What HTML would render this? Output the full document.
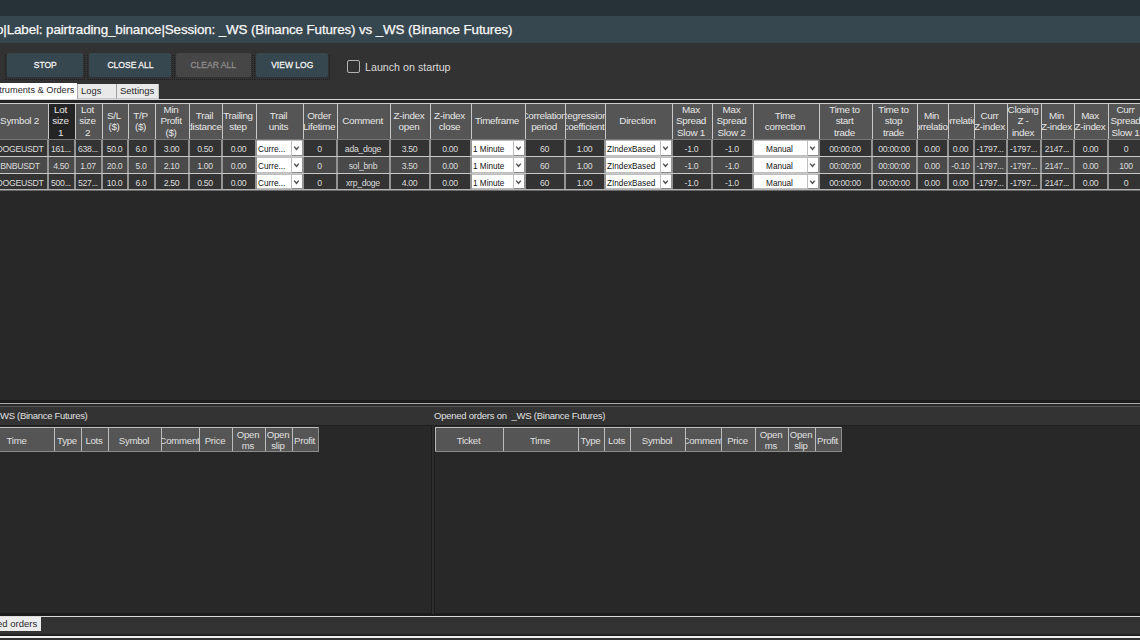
<!DOCTYPE html>
<html><head><meta charset="utf-8"><style>
*{margin:0;padding:0;box-sizing:border-box}
html,body{width:1140px;height:640px;overflow:hidden;background:#323232;font-family:"Liberation Sans",sans-serif;position:relative}
.a{position:absolute}
.c{position:absolute;display:flex;align-items:center;justify-content:center;overflow:hidden;white-space:nowrap}
.hd{color:#e6e6e6;font-size:9.9px;line-height:11.3px;text-align:center;letter-spacing:-0.3px;padding-right:3px;padding-bottom:1px}
.hd span{display:block;text-align:center}
.bd{color:#dcdcdc;font-size:8.7px;letter-spacing:-0.3px;padding-right:2px}
.btn{position:absolute;top:53px;height:24px;border-radius:2px;background:#37474f;color:#f2f2f2;font-size:9.8px;font-weight:normal;-webkit-text-stroke:0.3px currentColor;display:flex;align-items:center;justify-content:center;padding-bottom:1px}
.dot{position:absolute;border:1px dotted #1e1e1e;border-top:none}
.cb{position:absolute;background:#fff;color:#111;font-size:8.2px;display:flex;align-items:center;overflow:hidden;white-space:nowrap}
.dd{position:absolute;background:#fff;box-shadow:0 1px 0 #8a8a8a}
.oh{position:absolute;background:#555;color:#e0e0e0;font-size:9.6px;letter-spacing:-0.25px;padding-right:2px;line-height:11px;display:flex;align-items:center;justify-content:center;overflow:hidden;white-space:nowrap;text-align:center}
</style></head><body>

<div class="a" style="left:0;top:0;width:1140px;height:16px;background:#263238"></div>
<div class="a" style="left:0;top:16px;width:1140px;height:27px;background:#37474f"></div>
<div class="a" style="left:-4px;top:21px;height:16px;line-height:17px;font-size:13.4px;color:#f8f8f8;white-space:nowrap;-webkit-text-stroke:0.25px #f8f8f8;letter-spacing:-0.12px">o|Label: pairtrading_binance|Session: _WS (Binance Futures) vs _WS (Binance Futures)</div>
<div class="dot" style="left:5px;top:55px;width:80px;height:25px"></div>
<div class="btn" style="left:7px;width:76px;"><span style="display:inline-block;transform:scaleX(0.87)">STOP</span></div>
<div class="dot" style="left:87px;top:55px;width:86px;height:25px"></div>
<div class="btn" style="left:89px;width:82px;"><span style="display:inline-block;transform:scaleX(0.87)">CLOSE ALL</span></div>
<div class="dot" style="left:174px;top:55px;width:79px;height:25px"></div>
<div class="btn" style="left:176px;width:75px;background:#464646;color:#8c8c8c;"><span style="display:inline-block;transform:scaleX(0.87)">CLEAR ALL</span></div>
<div class="dot" style="left:254px;top:55px;width:76px;height:25px"></div>
<div class="btn" style="left:256px;width:72px;"><span style="display:inline-block;transform:scaleX(0.87)">VIEW LOG</span></div>
<div class="a" style="left:346.5px;top:59.5px;width:13.5px;height:13.5px;border:1.6px solid #b4b4b4;border-radius:2px"></div>
<div class="a" style="left:365px;top:59.5px;height:15px;line-height:15px;font-size:10.7px;color:#dadada;white-space:nowrap">Launch on startup</div>
<div class="a" style="left:0;top:83px;width:77px;height:17px;background:#fff"></div>
<div class="a" style="left:-13px;top:83px;height:15px;line-height:15px;font-size:9.2px;color:#2a2a2a;white-space:nowrap">Instruments &amp; Orders</div>
<div class="a" style="left:77px;top:84px;width:1px;height:15px;background:#a8a8a8"></div>
<div class="a" style="left:78px;top:84px;width:39px;height:15px;background:#e9e9e9;border-right:1px solid #a0a0a0;border-bottom:1px solid #c8c8d0"></div>
<div class="a" style="left:81px;top:83px;height:15px;line-height:15px;font-size:9.4px;color:#2a2a2a;white-space:nowrap">Logs</div>
<div class="a" style="left:117px;top:84px;width:42px;height:15px;background:#e9e9e9;border-right:1px solid #c0c0c0;border-bottom:1px solid #c8c8d0"></div>
<div class="a" style="left:120px;top:83px;height:15px;line-height:15px;font-size:9.5px;color:#2a2a2a;white-space:nowrap">Settings</div>
<div class="a" style="left:0;top:99px;width:1140px;height:1px;background:#d8d8d8"></div>
<div class="a" style="left:0;top:100px;width:1140px;height:3px;background:#232323"></div>
<div class="a" style="left:0;top:103px;width:1140px;height:1px;background:#cfcfcf"></div>
<div class="a" style="left:0;top:190px;width:1140px;height:210px;background:#282828"></div>
<div class="c hd" style="left:-6px;top:104px;width:54px;height:35px;background:#555555"><span>Symbol 2</span></div>
<div class="a" style="left:48px;top:104px;width:1px;height:35px;background:#c8c8c8"></div>
<div class="c hd" style="left:49px;top:104px;width:26px;height:35px;background:#242424"><span>Lot<br>size<br>1</span></div>
<div class="a" style="left:75px;top:104px;width:1px;height:35px;background:#c8c8c8"></div>
<div class="c hd" style="left:76px;top:104px;width:26px;height:35px;background:#555555"><span>Lot<br>size<br>2</span></div>
<div class="a" style="left:102px;top:104px;width:1px;height:35px;background:#c8c8c8"></div>
<div class="c hd" style="left:103px;top:104px;width:25px;height:35px;background:#555555"><span>S/L<br>($)</span></div>
<div class="a" style="left:128px;top:104px;width:1px;height:35px;background:#c8c8c8"></div>
<div class="c hd" style="left:129px;top:104px;width:26px;height:35px;background:#555555"><span>T/P<br>($)</span></div>
<div class="a" style="left:155px;top:104px;width:1px;height:35px;background:#c8c8c8"></div>
<div class="c hd" style="left:156px;top:104px;width:33px;height:35px;background:#555555"><span>Min<br>Profit<br>($)</span></div>
<div class="a" style="left:189px;top:104px;width:1px;height:35px;background:#c8c8c8"></div>
<div class="c hd" style="left:190px;top:104px;width:32px;height:35px;background:#555555"><span>Trail<br>distance</span></div>
<div class="a" style="left:222px;top:104px;width:1px;height:35px;background:#c8c8c8"></div>
<div class="c hd" style="left:223px;top:104px;width:33px;height:35px;background:#555555"><span>Trailing<br>step</span></div>
<div class="a" style="left:256px;top:104px;width:1px;height:35px;background:#c8c8c8"></div>
<div class="c hd" style="left:257px;top:104px;width:46px;height:35px;background:#555555"><span>Trail<br>units</span></div>
<div class="a" style="left:303px;top:104px;width:1px;height:35px;background:#c8c8c8"></div>
<div class="c hd" style="left:304px;top:104px;width:33px;height:35px;background:#555555"><span>Order<br>Lifetime</span></div>
<div class="a" style="left:337px;top:104px;width:1px;height:35px;background:#c8c8c8"></div>
<div class="c hd" style="left:338px;top:104px;width:52px;height:35px;background:#555555"><span>Comment</span></div>
<div class="a" style="left:390px;top:104px;width:1px;height:35px;background:#c8c8c8"></div>
<div class="c hd" style="left:391px;top:104px;width:39px;height:35px;background:#555555"><span>Z-index<br>open</span></div>
<div class="a" style="left:430px;top:104px;width:1px;height:35px;background:#c8c8c8"></div>
<div class="c hd" style="left:431px;top:104px;width:40px;height:35px;background:#555555"><span>Z-index<br>close</span></div>
<div class="a" style="left:471px;top:104px;width:1px;height:35px;background:#c8c8c8"></div>
<div class="c hd" style="left:472px;top:104px;width:53px;height:35px;background:#555555"><span>Timeframe</span></div>
<div class="a" style="left:525px;top:104px;width:1px;height:35px;background:#c8c8c8"></div>
<div class="c hd" style="left:526px;top:104px;width:39px;height:35px;background:#555555"><span>Correlation<br>period</span></div>
<div class="a" style="left:565px;top:104px;width:1px;height:35px;background:#c8c8c8"></div>
<div class="c hd" style="left:566px;top:104px;width:39px;height:35px;background:#555555"><span>Regression<br>coefficient</span></div>
<div class="a" style="left:605px;top:104px;width:1px;height:35px;background:#c8c8c8"></div>
<div class="c hd" style="left:606px;top:104px;width:66px;height:35px;background:#555555"><span>Direction</span></div>
<div class="a" style="left:672px;top:104px;width:1px;height:35px;background:#c8c8c8"></div>
<div class="c hd" style="left:673px;top:104px;width:39px;height:35px;background:#555555"><span>Max<br>Spread<br>Slow 1</span></div>
<div class="a" style="left:712px;top:104px;width:1px;height:35px;background:#c8c8c8"></div>
<div class="c hd" style="left:713px;top:104px;width:40px;height:35px;background:#555555"><span>Max<br>Spread<br>Slow 2</span></div>
<div class="a" style="left:753px;top:104px;width:1px;height:35px;background:#c8c8c8"></div>
<div class="c hd" style="left:754px;top:104px;width:65px;height:35px;background:#555555"><span>Time<br>correction</span></div>
<div class="a" style="left:819px;top:104px;width:1px;height:35px;background:#c8c8c8"></div>
<div class="c hd" style="left:820px;top:104px;width:52px;height:35px;background:#555555"><span>Time to<br>start<br>trade</span></div>
<div class="a" style="left:872px;top:104px;width:1px;height:35px;background:#c8c8c8"></div>
<div class="c hd" style="left:873px;top:104px;width:44px;height:35px;background:#555555"><span>Time to<br>stop<br>trade</span></div>
<div class="a" style="left:917px;top:104px;width:1px;height:35px;background:#c8c8c8"></div>
<div class="c hd" style="left:918px;top:104px;width:30px;height:35px;background:#555555"><span>Min<br>correlation</span></div>
<div class="a" style="left:948px;top:104px;width:1px;height:35px;background:#c8c8c8"></div>
<div class="c hd" style="left:949px;top:104px;width:25px;height:35px;background:#555555"><span>Correlation</span></div>
<div class="a" style="left:974px;top:104px;width:1px;height:35px;background:#c8c8c8"></div>
<div class="c hd" style="left:975px;top:104px;width:32px;height:35px;background:#555555"><span>Curr<br>Z-index</span></div>
<div class="a" style="left:1007px;top:104px;width:1px;height:35px;background:#c8c8c8"></div>
<div class="c hd" style="left:1008px;top:104px;width:33px;height:35px;background:#555555"><span>Closing<br>Z -<br>index</span></div>
<div class="a" style="left:1041px;top:104px;width:1px;height:35px;background:#c8c8c8"></div>
<div class="c hd" style="left:1042px;top:104px;width:32px;height:35px;background:#555555"><span>Min<br>Z-index</span></div>
<div class="a" style="left:1074px;top:104px;width:1px;height:35px;background:#c8c8c8"></div>
<div class="c hd" style="left:1075px;top:104px;width:33px;height:35px;background:#555555"><span>Max<br>Z-index</span></div>
<div class="a" style="left:1108px;top:104px;width:1px;height:35px;background:#c8c8c8"></div>
<div class="c hd" style="left:1109px;top:104px;width:36px;height:35px;background:#555555"><span>Curr<br>Spread<br>Slow 1</span></div>
<div class="a" style="left:1145px;top:104px;width:1px;height:35px;background:#c8c8c8"></div>
<div class="a" style="left:0;top:139px;width:1140px;height:1px;background:#777"></div>
<div class="a" style="left:0;top:140px;width:1140px;height:16px;background:#333333"></div>
<div class="c bd" style="left:-6px;top:141px;width:54px;height:16px">DOGEUSDT</div>
<div class="a" style="left:47px;top:140px;width:2px;height:16px;background:#939393"></div>
<div class="c bd" style="left:49px;top:141px;width:26px;height:16px">161...</div>
<div class="a" style="left:74px;top:140px;width:2px;height:16px;background:#939393"></div>
<div class="c bd" style="left:76px;top:141px;width:26px;height:16px">638...</div>
<div class="a" style="left:101px;top:140px;width:2px;height:16px;background:#939393"></div>
<div class="c bd" style="left:103px;top:141px;width:25px;height:16px">50.0</div>
<div class="a" style="left:127px;top:140px;width:2px;height:16px;background:#939393"></div>
<div class="c bd" style="left:129px;top:141px;width:26px;height:16px">6.0</div>
<div class="a" style="left:154px;top:140px;width:2px;height:16px;background:#939393"></div>
<div class="c bd" style="left:156px;top:141px;width:33px;height:16px">3.00</div>
<div class="a" style="left:188px;top:140px;width:2px;height:16px;background:#939393"></div>
<div class="c bd" style="left:190px;top:141px;width:32px;height:16px">0.50</div>
<div class="a" style="left:221px;top:140px;width:2px;height:16px;background:#939393"></div>
<div class="c bd" style="left:223px;top:141px;width:33px;height:16px">0.00</div>
<div class="a" style="left:255px;top:140px;width:2px;height:16px;background:#939393"></div>
<div class="a" style="left:257px;top:140px;width:46px;height:16px;background:#bdbdbd"></div>
<div class="cb" style="left:257px;top:141px;width:34px;height:14px;padding-left:1px;padding-top:3px;">Curre...</div>
<div class="dd" style="left:292px;top:141px;width:10px;height:14px"><svg width="10" height="14" style="position:absolute;left:0;top:0"><path d="M2.2 5.6 L4.5 8.3 L6.8 5.6" stroke="#505050" stroke-width="1.4" fill="none"/></svg></div>
<div class="a" style="left:302px;top:140px;width:2px;height:16px;background:#939393"></div>
<div class="c bd" style="left:304px;top:141px;width:33px;height:16px">0</div>
<div class="a" style="left:336px;top:140px;width:2px;height:16px;background:#939393"></div>
<div class="c bd" style="left:338px;top:141px;width:52px;height:16px">ada_doge</div>
<div class="a" style="left:389px;top:140px;width:2px;height:16px;background:#939393"></div>
<div class="c bd" style="left:391px;top:141px;width:39px;height:16px">3.50</div>
<div class="a" style="left:429px;top:140px;width:2px;height:16px;background:#939393"></div>
<div class="c bd" style="left:431px;top:141px;width:40px;height:16px">0.00</div>
<div class="a" style="left:470px;top:140px;width:2px;height:16px;background:#939393"></div>
<div class="a" style="left:472px;top:140px;width:53px;height:16px;background:#bdbdbd"></div>
<div class="cb" style="left:472px;top:141px;width:41px;height:14px;padding-left:1px;padding-top:3px;">1 Minute</div>
<div class="dd" style="left:514px;top:141px;width:10px;height:14px"><svg width="10" height="14" style="position:absolute;left:0;top:0"><path d="M2.2 5.6 L4.5 8.3 L6.8 5.6" stroke="#505050" stroke-width="1.4" fill="none"/></svg></div>
<div class="a" style="left:524px;top:140px;width:2px;height:16px;background:#939393"></div>
<div class="c bd" style="left:526px;top:141px;width:39px;height:16px">60</div>
<div class="a" style="left:564px;top:140px;width:2px;height:16px;background:#939393"></div>
<div class="c bd" style="left:566px;top:141px;width:39px;height:16px">1.00</div>
<div class="a" style="left:604px;top:140px;width:2px;height:16px;background:#939393"></div>
<div class="a" style="left:606px;top:140px;width:66px;height:16px;background:#bdbdbd"></div>
<div class="cb" style="left:606px;top:141px;width:54px;height:14px;padding-left:1px;padding-top:3px;">ZIndexBased</div>
<div class="dd" style="left:661px;top:141px;width:10px;height:14px"><svg width="10" height="14" style="position:absolute;left:0;top:0"><path d="M2.2 5.6 L4.5 8.3 L6.8 5.6" stroke="#505050" stroke-width="1.4" fill="none"/></svg></div>
<div class="a" style="left:671px;top:140px;width:2px;height:16px;background:#939393"></div>
<div class="c bd" style="left:673px;top:141px;width:39px;height:16px">-1.0</div>
<div class="a" style="left:711px;top:140px;width:2px;height:16px;background:#939393"></div>
<div class="c bd" style="left:713px;top:141px;width:40px;height:16px">-1.0</div>
<div class="a" style="left:752px;top:140px;width:2px;height:16px;background:#939393"></div>
<div class="a" style="left:754px;top:140px;width:65px;height:16px;background:#bdbdbd"></div>
<div class="cb" style="left:754px;top:141px;width:53px;height:14px;padding-left:1px;padding-top:3px;justify-content:center;padding-right:3px;">Manual</div>
<div class="dd" style="left:808px;top:141px;width:10px;height:14px"><svg width="10" height="14" style="position:absolute;left:0;top:0"><path d="M2.2 5.6 L4.5 8.3 L6.8 5.6" stroke="#505050" stroke-width="1.4" fill="none"/></svg></div>
<div class="a" style="left:818px;top:140px;width:2px;height:16px;background:#939393"></div>
<div class="c bd" style="left:820px;top:141px;width:52px;height:16px">00:00:00</div>
<div class="a" style="left:871px;top:140px;width:2px;height:16px;background:#939393"></div>
<div class="c bd" style="left:873px;top:141px;width:44px;height:16px">00:00:00</div>
<div class="a" style="left:916px;top:140px;width:2px;height:16px;background:#939393"></div>
<div class="c bd" style="left:918px;top:141px;width:30px;height:16px">0.00</div>
<div class="a" style="left:947px;top:140px;width:2px;height:16px;background:#939393"></div>
<div class="c bd" style="left:949px;top:141px;width:25px;height:16px">0.00</div>
<div class="a" style="left:973px;top:140px;width:2px;height:16px;background:#939393"></div>
<div class="c bd" style="left:975px;top:141px;width:32px;height:16px">-1797...</div>
<div class="a" style="left:1006px;top:140px;width:2px;height:16px;background:#939393"></div>
<div class="c bd" style="left:1008px;top:141px;width:33px;height:16px">-1797...</div>
<div class="a" style="left:1040px;top:140px;width:2px;height:16px;background:#939393"></div>
<div class="c bd" style="left:1042px;top:141px;width:32px;height:16px">2147...</div>
<div class="a" style="left:1073px;top:140px;width:2px;height:16px;background:#939393"></div>
<div class="c bd" style="left:1075px;top:141px;width:33px;height:16px">0.00</div>
<div class="a" style="left:1107px;top:140px;width:2px;height:16px;background:#939393"></div>
<div class="c bd" style="left:1109px;top:141px;width:36px;height:16px">0</div>
<div class="a" style="left:1144px;top:140px;width:2px;height:16px;background:#939393"></div>
<div class="a" style="left:0;top:156px;width:1140px;height:1px;background:#c8c8c8"></div>
<div class="a" style="left:0;top:157px;width:1140px;height:16px;background:#4a4a4a"></div>
<div class="c bd" style="left:-6px;top:158px;width:54px;height:16px">BNBUSDT</div>
<div class="a" style="left:47px;top:157px;width:2px;height:16px;background:#939393"></div>
<div class="c bd" style="left:49px;top:158px;width:26px;height:16px">4.50</div>
<div class="a" style="left:74px;top:157px;width:2px;height:16px;background:#939393"></div>
<div class="c bd" style="left:76px;top:158px;width:26px;height:16px">1.07</div>
<div class="a" style="left:101px;top:157px;width:2px;height:16px;background:#939393"></div>
<div class="c bd" style="left:103px;top:158px;width:25px;height:16px">20.0</div>
<div class="a" style="left:127px;top:157px;width:2px;height:16px;background:#939393"></div>
<div class="c bd" style="left:129px;top:158px;width:26px;height:16px">5.0</div>
<div class="a" style="left:154px;top:157px;width:2px;height:16px;background:#939393"></div>
<div class="c bd" style="left:156px;top:158px;width:33px;height:16px">2.10</div>
<div class="a" style="left:188px;top:157px;width:2px;height:16px;background:#939393"></div>
<div class="c bd" style="left:190px;top:158px;width:32px;height:16px">1.00</div>
<div class="a" style="left:221px;top:157px;width:2px;height:16px;background:#939393"></div>
<div class="c bd" style="left:223px;top:158px;width:33px;height:16px">0.00</div>
<div class="a" style="left:255px;top:157px;width:2px;height:16px;background:#939393"></div>
<div class="a" style="left:257px;top:157px;width:46px;height:16px;background:#bdbdbd"></div>
<div class="cb" style="left:257px;top:158px;width:34px;height:14px;padding-left:1px;padding-top:3px;">Curre...</div>
<div class="dd" style="left:292px;top:158px;width:10px;height:14px"><svg width="10" height="14" style="position:absolute;left:0;top:0"><path d="M2.2 5.6 L4.5 8.3 L6.8 5.6" stroke="#505050" stroke-width="1.4" fill="none"/></svg></div>
<div class="a" style="left:302px;top:157px;width:2px;height:16px;background:#939393"></div>
<div class="c bd" style="left:304px;top:158px;width:33px;height:16px">0</div>
<div class="a" style="left:336px;top:157px;width:2px;height:16px;background:#939393"></div>
<div class="c bd" style="left:338px;top:158px;width:52px;height:16px">sol_bnb</div>
<div class="a" style="left:389px;top:157px;width:2px;height:16px;background:#939393"></div>
<div class="c bd" style="left:391px;top:158px;width:39px;height:16px">3.50</div>
<div class="a" style="left:429px;top:157px;width:2px;height:16px;background:#939393"></div>
<div class="c bd" style="left:431px;top:158px;width:40px;height:16px">0.00</div>
<div class="a" style="left:470px;top:157px;width:2px;height:16px;background:#939393"></div>
<div class="a" style="left:472px;top:157px;width:53px;height:16px;background:#bdbdbd"></div>
<div class="cb" style="left:472px;top:158px;width:41px;height:14px;padding-left:1px;padding-top:3px;">1 Minute</div>
<div class="dd" style="left:514px;top:158px;width:10px;height:14px"><svg width="10" height="14" style="position:absolute;left:0;top:0"><path d="M2.2 5.6 L4.5 8.3 L6.8 5.6" stroke="#505050" stroke-width="1.4" fill="none"/></svg></div>
<div class="a" style="left:524px;top:157px;width:2px;height:16px;background:#939393"></div>
<div class="c bd" style="left:526px;top:158px;width:39px;height:16px">60</div>
<div class="a" style="left:564px;top:157px;width:2px;height:16px;background:#939393"></div>
<div class="c bd" style="left:566px;top:158px;width:39px;height:16px">1.00</div>
<div class="a" style="left:604px;top:157px;width:2px;height:16px;background:#939393"></div>
<div class="a" style="left:606px;top:157px;width:66px;height:16px;background:#bdbdbd"></div>
<div class="cb" style="left:606px;top:158px;width:54px;height:14px;padding-left:1px;padding-top:3px;">ZIndexBased</div>
<div class="dd" style="left:661px;top:158px;width:10px;height:14px"><svg width="10" height="14" style="position:absolute;left:0;top:0"><path d="M2.2 5.6 L4.5 8.3 L6.8 5.6" stroke="#505050" stroke-width="1.4" fill="none"/></svg></div>
<div class="a" style="left:671px;top:157px;width:2px;height:16px;background:#939393"></div>
<div class="c bd" style="left:673px;top:158px;width:39px;height:16px">-1.0</div>
<div class="a" style="left:711px;top:157px;width:2px;height:16px;background:#939393"></div>
<div class="c bd" style="left:713px;top:158px;width:40px;height:16px">-1.0</div>
<div class="a" style="left:752px;top:157px;width:2px;height:16px;background:#939393"></div>
<div class="a" style="left:754px;top:157px;width:65px;height:16px;background:#bdbdbd"></div>
<div class="cb" style="left:754px;top:158px;width:53px;height:14px;padding-left:1px;padding-top:3px;justify-content:center;padding-right:3px;">Manual</div>
<div class="dd" style="left:808px;top:158px;width:10px;height:14px"><svg width="10" height="14" style="position:absolute;left:0;top:0"><path d="M2.2 5.6 L4.5 8.3 L6.8 5.6" stroke="#505050" stroke-width="1.4" fill="none"/></svg></div>
<div class="a" style="left:818px;top:157px;width:2px;height:16px;background:#939393"></div>
<div class="c bd" style="left:820px;top:158px;width:52px;height:16px">00:00:00</div>
<div class="a" style="left:871px;top:157px;width:2px;height:16px;background:#939393"></div>
<div class="c bd" style="left:873px;top:158px;width:44px;height:16px">00:00:00</div>
<div class="a" style="left:916px;top:157px;width:2px;height:16px;background:#939393"></div>
<div class="c bd" style="left:918px;top:158px;width:30px;height:16px">0.00</div>
<div class="a" style="left:947px;top:157px;width:2px;height:16px;background:#939393"></div>
<div class="c bd" style="left:949px;top:158px;width:25px;height:16px">-0.10</div>
<div class="a" style="left:973px;top:157px;width:2px;height:16px;background:#939393"></div>
<div class="c bd" style="left:975px;top:158px;width:32px;height:16px">-1797...</div>
<div class="a" style="left:1006px;top:157px;width:2px;height:16px;background:#939393"></div>
<div class="c bd" style="left:1008px;top:158px;width:33px;height:16px">-1797...</div>
<div class="a" style="left:1040px;top:157px;width:2px;height:16px;background:#939393"></div>
<div class="c bd" style="left:1042px;top:158px;width:32px;height:16px">2147...</div>
<div class="a" style="left:1073px;top:157px;width:2px;height:16px;background:#939393"></div>
<div class="c bd" style="left:1075px;top:158px;width:33px;height:16px">0.00</div>
<div class="a" style="left:1107px;top:157px;width:2px;height:16px;background:#939393"></div>
<div class="c bd" style="left:1109px;top:158px;width:36px;height:16px">100</div>
<div class="a" style="left:1144px;top:157px;width:2px;height:16px;background:#939393"></div>
<div class="a" style="left:0;top:173px;width:1140px;height:1px;background:#c8c8c8"></div>
<div class="a" style="left:0;top:174px;width:1140px;height:15px;background:#333333"></div>
<div class="c bd" style="left:-6px;top:175px;width:54px;height:15px">DOGEUSDT</div>
<div class="a" style="left:47px;top:174px;width:2px;height:15px;background:#939393"></div>
<div class="c bd" style="left:49px;top:175px;width:26px;height:15px">500...</div>
<div class="a" style="left:74px;top:174px;width:2px;height:15px;background:#939393"></div>
<div class="c bd" style="left:76px;top:175px;width:26px;height:15px">527...</div>
<div class="a" style="left:101px;top:174px;width:2px;height:15px;background:#939393"></div>
<div class="c bd" style="left:103px;top:175px;width:25px;height:15px">10.0</div>
<div class="a" style="left:127px;top:174px;width:2px;height:15px;background:#939393"></div>
<div class="c bd" style="left:129px;top:175px;width:26px;height:15px">6.0</div>
<div class="a" style="left:154px;top:174px;width:2px;height:15px;background:#939393"></div>
<div class="c bd" style="left:156px;top:175px;width:33px;height:15px">2.50</div>
<div class="a" style="left:188px;top:174px;width:2px;height:15px;background:#939393"></div>
<div class="c bd" style="left:190px;top:175px;width:32px;height:15px">0.50</div>
<div class="a" style="left:221px;top:174px;width:2px;height:15px;background:#939393"></div>
<div class="c bd" style="left:223px;top:175px;width:33px;height:15px">0.00</div>
<div class="a" style="left:255px;top:174px;width:2px;height:15px;background:#939393"></div>
<div class="a" style="left:257px;top:174px;width:46px;height:15px;background:#bdbdbd"></div>
<div class="cb" style="left:257px;top:175px;width:34px;height:13px;padding-left:1px;padding-top:3px;">Curre...</div>
<div class="dd" style="left:292px;top:175px;width:10px;height:13px"><svg width="10" height="14" style="position:absolute;left:0;top:0"><path d="M2.2 5.6 L4.5 8.3 L6.8 5.6" stroke="#505050" stroke-width="1.4" fill="none"/></svg></div>
<div class="a" style="left:302px;top:174px;width:2px;height:15px;background:#939393"></div>
<div class="c bd" style="left:304px;top:175px;width:33px;height:15px">0</div>
<div class="a" style="left:336px;top:174px;width:2px;height:15px;background:#939393"></div>
<div class="c bd" style="left:338px;top:175px;width:52px;height:15px">xrp_doge</div>
<div class="a" style="left:389px;top:174px;width:2px;height:15px;background:#939393"></div>
<div class="c bd" style="left:391px;top:175px;width:39px;height:15px">4.00</div>
<div class="a" style="left:429px;top:174px;width:2px;height:15px;background:#939393"></div>
<div class="c bd" style="left:431px;top:175px;width:40px;height:15px">0.00</div>
<div class="a" style="left:470px;top:174px;width:2px;height:15px;background:#939393"></div>
<div class="a" style="left:472px;top:174px;width:53px;height:15px;background:#bdbdbd"></div>
<div class="cb" style="left:472px;top:175px;width:41px;height:13px;padding-left:1px;padding-top:3px;">1 Minute</div>
<div class="dd" style="left:514px;top:175px;width:10px;height:13px"><svg width="10" height="14" style="position:absolute;left:0;top:0"><path d="M2.2 5.6 L4.5 8.3 L6.8 5.6" stroke="#505050" stroke-width="1.4" fill="none"/></svg></div>
<div class="a" style="left:524px;top:174px;width:2px;height:15px;background:#939393"></div>
<div class="c bd" style="left:526px;top:175px;width:39px;height:15px">60</div>
<div class="a" style="left:564px;top:174px;width:2px;height:15px;background:#939393"></div>
<div class="c bd" style="left:566px;top:175px;width:39px;height:15px">1.00</div>
<div class="a" style="left:604px;top:174px;width:2px;height:15px;background:#939393"></div>
<div class="a" style="left:606px;top:174px;width:66px;height:15px;background:#bdbdbd"></div>
<div class="cb" style="left:606px;top:175px;width:54px;height:13px;padding-left:1px;padding-top:3px;">ZIndexBased</div>
<div class="dd" style="left:661px;top:175px;width:10px;height:13px"><svg width="10" height="14" style="position:absolute;left:0;top:0"><path d="M2.2 5.6 L4.5 8.3 L6.8 5.6" stroke="#505050" stroke-width="1.4" fill="none"/></svg></div>
<div class="a" style="left:671px;top:174px;width:2px;height:15px;background:#939393"></div>
<div class="c bd" style="left:673px;top:175px;width:39px;height:15px">-1.0</div>
<div class="a" style="left:711px;top:174px;width:2px;height:15px;background:#939393"></div>
<div class="c bd" style="left:713px;top:175px;width:40px;height:15px">-1.0</div>
<div class="a" style="left:752px;top:174px;width:2px;height:15px;background:#939393"></div>
<div class="a" style="left:754px;top:174px;width:65px;height:15px;background:#bdbdbd"></div>
<div class="cb" style="left:754px;top:175px;width:53px;height:13px;padding-left:1px;padding-top:3px;justify-content:center;padding-right:3px;">Manual</div>
<div class="dd" style="left:808px;top:175px;width:10px;height:13px"><svg width="10" height="14" style="position:absolute;left:0;top:0"><path d="M2.2 5.6 L4.5 8.3 L6.8 5.6" stroke="#505050" stroke-width="1.4" fill="none"/></svg></div>
<div class="a" style="left:818px;top:174px;width:2px;height:15px;background:#939393"></div>
<div class="c bd" style="left:820px;top:175px;width:52px;height:15px">00:00:00</div>
<div class="a" style="left:871px;top:174px;width:2px;height:15px;background:#939393"></div>
<div class="c bd" style="left:873px;top:175px;width:44px;height:15px">00:00:00</div>
<div class="a" style="left:916px;top:174px;width:2px;height:15px;background:#939393"></div>
<div class="c bd" style="left:918px;top:175px;width:30px;height:15px">0.00</div>
<div class="a" style="left:947px;top:174px;width:2px;height:15px;background:#939393"></div>
<div class="c bd" style="left:949px;top:175px;width:25px;height:15px">0.00</div>
<div class="a" style="left:973px;top:174px;width:2px;height:15px;background:#939393"></div>
<div class="c bd" style="left:975px;top:175px;width:32px;height:15px">-1797...</div>
<div class="a" style="left:1006px;top:174px;width:2px;height:15px;background:#939393"></div>
<div class="c bd" style="left:1008px;top:175px;width:33px;height:15px">-1797...</div>
<div class="a" style="left:1040px;top:174px;width:2px;height:15px;background:#939393"></div>
<div class="c bd" style="left:1042px;top:175px;width:32px;height:15px">2147...</div>
<div class="a" style="left:1073px;top:174px;width:2px;height:15px;background:#939393"></div>
<div class="c bd" style="left:1075px;top:175px;width:33px;height:15px">0.00</div>
<div class="a" style="left:1107px;top:174px;width:2px;height:15px;background:#939393"></div>
<div class="c bd" style="left:1109px;top:175px;width:36px;height:15px">0</div>
<div class="a" style="left:1144px;top:174px;width:2px;height:15px;background:#939393"></div>
<div class="a" style="left:0;top:189px;width:1140px;height:1px;background:#c8c8c8"></div>
<div class="a" style="left:0;top:189px;width:1140px;height:1px;background:#b4b4b4"></div>
<div class="a" style="left:0;top:190px;width:1140px;height:1px;background:#6a6a6a"></div>
<div class="a" style="left:0;top:400px;width:1140px;height:3px;background:#1c1c1c"></div>
<div class="a" style="left:0;top:403px;width:1140px;height:1px;background:#a8a8a8"></div>
<div class="a" style="left:0;top:404px;width:1140px;height:2px;background:#2a2a2a"></div>
<div class="a" style="left:0;top:406px;width:1140px;height:1px;background:#555"></div>
<div class="a" style="left:0;top:407px;width:1140px;height:18px;background:#333"></div>
<div class="a" style="left:0;top:425px;width:1140px;height:1px;background:#1e1e1e"></div>
<div class="a" style="left:0;top:407px;height:17px;line-height:17px;font-size:9.5px;color:#e0e0e0;white-space:nowrap;letter-spacing:-0.3px">WS (Binance Futures)</div>
<div class="a" style="left:434px;top:407px;height:17px;line-height:17px;font-size:9.5px;color:#e0e0e0;white-space:nowrap;letter-spacing:-0.24px">Opened orders on&nbsp; _WS (Binance Futures)</div>
<div class="a" style="left:0;top:426px;width:432px;height:188px;background:#282828;border-right:1px solid #1c1c1c;border-bottom:1px solid #1c1c1c"></div>
<div class="a" style="left:432px;top:426px;width:2px;height:188px;background:#2e2e2e"></div>
<div class="a" style="left:434px;top:426px;width:706px;height:188px;background:#282828;border-left:1px solid #1c1c1c;border-bottom:1px solid #1c1c1c"></div>
<div class="a" style="left:-20px;top:427px;width:339px;height:25px;background:#bdbdbd"></div>
<div class="a" style="left:-20px;top:451px;width:339px;height:1px;background:#8c8c8c"></div>
<div class="a" style="left:318px;top:427px;width:1px;height:25px;background:#8c8c8c"></div>
<div class="oh" style="left:-19px;top:428px;width:73px;height:23px;padding-top:1px"><span style="display:block">Time</span></div>
<div class="oh" style="left:55px;top:428px;width:26px;height:23px;padding-top:1px"><span style="display:block">Type</span></div>
<div class="oh" style="left:82px;top:428px;width:26px;height:23px;padding-top:1px"><span style="display:block">Lots</span></div>
<div class="oh" style="left:109px;top:428px;width:52px;height:23px;padding-top:1px"><span style="display:block">Symbol</span></div>
<div class="oh" style="left:162px;top:428px;width:37px;height:23px;padding-top:1px"><span style="display:block">Comment</span></div>
<div class="oh" style="left:200px;top:428px;width:32px;height:23px;padding-top:1px"><span style="display:block">Price</span></div>
<div class="oh" style="left:233px;top:428px;width:32px;height:23px;padding-top:1px"><span style="display:block">Open<br>ms</span></div>
<div class="oh" style="left:266px;top:428px;width:26px;height:23px;padding-top:1px"><span style="display:block">Open<br>slip</span></div>
<div class="oh" style="left:293px;top:428px;width:25px;height:23px;padding-top:1px"><span style="display:block">Profit</span></div>
<div class="a" style="left:435px;top:427px;width:407px;height:25px;background:#bdbdbd"></div>
<div class="a" style="left:435px;top:451px;width:407px;height:1px;background:#8c8c8c"></div>
<div class="a" style="left:841px;top:427px;width:1px;height:25px;background:#8c8c8c"></div>
<div class="oh" style="left:436px;top:428px;width:67px;height:23px;padding-top:1px"><span style="display:block">Ticket</span></div>
<div class="oh" style="left:504px;top:428px;width:74px;height:23px;padding-top:1px"><span style="display:block">Time</span></div>
<div class="oh" style="left:579px;top:428px;width:25px;height:23px;padding-top:1px"><span style="display:block">Type</span></div>
<div class="oh" style="left:605px;top:428px;width:25px;height:23px;padding-top:1px"><span style="display:block">Lots</span></div>
<div class="oh" style="left:631px;top:428px;width:54px;height:23px;padding-top:1px"><span style="display:block">Symbol</span></div>
<div class="oh" style="left:686px;top:428px;width:35px;height:23px;padding-top:1px"><span style="display:block">Comment</span></div>
<div class="oh" style="left:722px;top:428px;width:33px;height:23px;padding-top:1px"><span style="display:block">Price</span></div>
<div class="oh" style="left:756px;top:428px;width:32px;height:23px;padding-top:1px"><span style="display:block">Open<br>ms</span></div>
<div class="oh" style="left:789px;top:428px;width:26px;height:23px;padding-top:1px"><span style="display:block">Open<br>slip</span></div>
<div class="oh" style="left:816px;top:428px;width:25px;height:23px;padding-top:1px"><span style="display:block">Profit</span></div>
<div class="a" style="left:0;top:614px;width:1140px;height:2px;background:#1c1c1c"></div>
<div class="a" style="left:0;top:616px;width:1140px;height:1px;background:#dcdcdc"></div>
<div class="a" style="left:0;top:617px;width:1140px;height:17px;background:#333"></div>
<div class="a" style="left:0;top:617px;width:41px;height:14px;background:#ececec"></div>
<div class="a" style="left:-3px;top:617px;height:14px;line-height:14px;font-size:9.5px;color:#2a2a2a;white-space:nowrap">ed orders</div>
<div class="a" style="left:0;top:634px;width:1140px;height:2px;background:#222"></div>
<div class="a" style="left:0;top:636px;width:1140px;height:2px;background:#eeeeee"></div>
<div class="a" style="left:0;top:638px;width:1140px;height:2px;background:#333"></div>
</body></html>
